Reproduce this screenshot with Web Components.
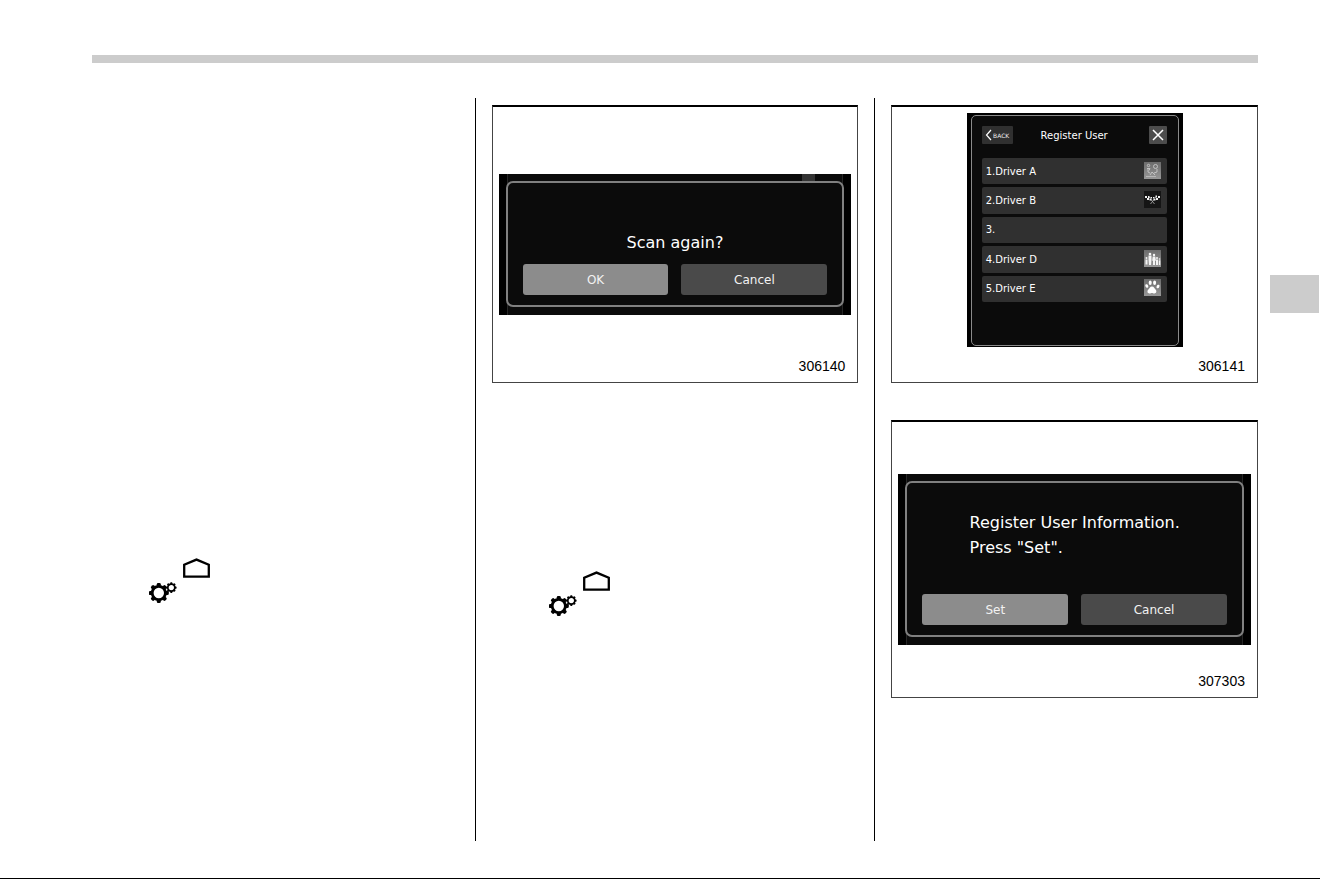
<!DOCTYPE html>
<html lang="en">
<head>
<meta charset="utf-8">
<title>Register User</title>
<style>
  body {
    margin: 0;
    background: #fff;
    font-family: "DejaVu Sans", sans-serif;
  }
</style>
</head>
<body>
<manual-page>
  <manual-column class="first">
    <menu-path></menu-path>
  </manual-column>
  <manual-column class="figures">
    <manual-figure number="306140" style="--top: 67px">
      <confirm-dialog accept="OK" class="strip" style="--height: 141px; --line: 24px; --text-gap: 9px">Scan again?</confirm-dialog>
    </manual-figure>
    <menu-path style="margin-top: 188px"></menu-path>
  </manual-column>
  <manual-column class="figures">
    <manual-figure number="306141" style="--top: 6px">
      <user-list>
        <user-row icon="couple">1.Driver A</user-row>
        <user-row icon="flags">2.Driver B</user-row>
        <user-row>3.</user-row>
        <user-row icon="family">4.Driver D</user-row>
        <user-row icon="paw">5.Driver E</user-row>
      </user-list>
    </manual-figure>
    <manual-figure number="307303" style="--top: 52px; margin-top: 37px">
      <confirm-dialog accept="Set" style="--height: 171px; --line: 25px; --text-gap: 34px">Register User Information.<br>Press "Set".</confirm-dialog>
    </manual-figure>
  </manual-column>
</manual-page>

<script>
class ManualPage extends HTMLElement {
  connectedCallback() {
    this.attachShadow({ mode: 'open' });
    this.shadowRoot.innerHTML = `
      <style>
        :host {
          box-sizing: border-box;
          display: grid;
          grid-template-columns: 1fr 49px;
          column-gap: 12px;
          min-height: 100vh;
          padding: 55px 1px 37px 92px;
          border-bottom: 1px solid #000;
        }
        main {
          display: flex;
          flex-direction: column;
          gap: 35px;
        }
        .bar {
          height: 8px;
          background: #ccc;
        }
        .columns {
          flex: 1;
          display: grid;
          grid-template-columns: 1fr 1px 1fr 1px 1fr;
          column-gap: 16px;
        }
        .columns ::slotted(*) { grid-row: 1; }
        .columns ::slotted(:nth-child(1)) { grid-column: 1; }
        .columns ::slotted(:nth-child(2)) { grid-column: 3; }
        .columns ::slotted(:nth-child(3)) { grid-column: 5; }
        .rule {
          grid-row: 1;
          background: #000;
        }
        .rule.a { grid-column: 2; }
        .rule.b { grid-column: 4; }
        aside { padding-top: 220px; }
        .tab {
          height: 38px;
          background: #ccc;
        }
      </style>
      <main>
        <div class="bar"></div>
        <div class="columns">
          <slot></slot>
          <div class="rule a"></div>
          <div class="rule b"></div>
        </div>
      </main>
      <aside><div class="tab"></div></aside>
    `;
  }
}

class ManualColumn extends HTMLElement {
  connectedCallback() {
    this.attachShadow({ mode: 'open' });
    this.shadowRoot.innerHTML = `
      <style>
        :host {
          display: flex;
          flex-direction: column;
          min-width: 0;
        }
        :host(.first) { padding-top: 460px; }
        :host(.figures) { padding-top: 7px; }
      </style>
      <slot></slot>
    `;
  }
}

class ManualFigure extends HTMLElement {
  connectedCallback() {
    this.attachShadow({ mode: 'open' });
    this.shadowRoot.innerHTML = `
      <style>
        :host { display: block; }
        figure {
          box-sizing: border-box;
          display: flex;
          flex-direction: column;
          min-height: 278px;
          margin: 0;
          padding: var(--top) 6px 8px;
          border: 1px solid #444;
          border-top: 2px solid #000;
        }
        figcaption {
          margin-top: auto;
          padding-right: 6px;
          text-align: right;
          font: 14px/16px "Liberation Sans", sans-serif;
          color: #000;
        }
      </style>
      <figure>
        <slot></slot>
        <figcaption>${this.getAttribute('number')}</figcaption>
      </figure>
    `;
  }
}

class ConfirmDialog extends HTMLElement {
  connectedCallback() {
    this.attachShadow({ mode: 'open' });
    this.shadowRoot.innerHTML = `
      <style>
        :host {
          box-sizing: border-box;
          display: flex;
          height: var(--height);
          padding: 7px 7px 8px;
          background:
            linear-gradient(#262626, #262626) 8px 0 / 1px 100% no-repeat,
            linear-gradient(#262626, #262626) calc(100% - 8px) 0 / 1px 100% no-repeat,
            linear-gradient(90deg, #000 8px, #0b0b0b 8px calc(100% - 8px), #000 calc(100% - 8px));
        }
        /* part of the list behind the dialog shows above its frame */
        :host(.strip) {
          background:
            linear-gradient(#333, #333) calc(100% - 36px) 0 / 13px 8px no-repeat,
            linear-gradient(#262626, #262626) 8px 0 / 1px 100% no-repeat,
            linear-gradient(#262626, #262626) calc(100% - 8px) 0 / 1px 100% no-repeat,
            linear-gradient(90deg, #000 8px, #0b0b0b 8px calc(100% - 8px), #000 calc(100% - 8px));
        }
        .dialog {
          flex: 1;
          display: flex;
          flex-direction: column;
          justify-content: flex-end;
          align-items: center;
          gap: var(--text-gap);
          padding: 0 15px 10px;
          border: 2px solid #808080;
          border-radius: 7px;
          background: #0b0b0b;
        }
        p {
          margin: 0;
          font-size: 16px;
          line-height: var(--line);
          color: #fff;
        }
        .buttons {
          align-self: stretch;
          display: grid;
          grid-template-columns: 1fr 1fr;
          gap: 13px;
        }
        button {
          height: 31px;
          padding: 0;
          border: 0;
          border-radius: 3px;
          background: #4a4a4a;
          font: inherit;
          font-size: 12px;
          color: #f2f2f2;
        }
        .accept { background: #8c8c8c; }
      </style>
      <div class="dialog" role="dialog">
        <p><slot></slot></p>
        <div class="buttons">
          <button class="accept" type="button">${this.getAttribute('accept')}</button>
          <button type="button">Cancel</button>
        </div>
      </div>
    `;
  }
}

class UserList extends HTMLElement {
  connectedCallback() {
    this.attachShadow({ mode: 'open' });
    this.shadowRoot.innerHTML = `
      <style>
        :host {
          box-sizing: border-box;
          align-self: center;
          display: flex;
          width: 216px;
          height: 234px;
          padding: 2px 4px 1px;
          background: #000;
        }
        .screen {
          flex: 1;
          padding: 10px 11px 10px 10px;
          border: 1px solid #8a8a8a;
          border-radius: 5px;
          background: #0b0b0b;
        }
        header {
          display: grid;
          grid-template-columns: 31px 1fr 31px;
          align-items: center;
          height: 18px;
          margin-bottom: 14px;
        }
        h2 {
          margin: 0;
          font-size: 10px;
          font-weight: normal;
          text-align: center;
          color: #fff;
        }
        button {
          display: flex;
          justify-content: center;
          align-items: center;
          gap: 1px;
          height: 18px;
          padding: 0;
          border: 0;
          border-radius: 1px;
          background: #303030;
          font: inherit;
          font-size: 6px;
          color: #eee;
        }
        .close {
          justify-self: end;
          width: 18px;
          background: #4c4c4c;
        }
        svg {
          fill: none;
          stroke: #fff;
        }
        .rows {
          display: grid;
          grid-auto-rows: 1fr;
          gap: 3px;
          height: 144px;
        }
      </style>
      <div class="screen">
        <header>
          <button class="back" type="button">
            <svg width="7" height="12" viewBox="0 0 7 12" stroke-width="1.2"><path d="M6 1 1.500 6 6 11"/></svg>BACK
          </button>
          <h2>Register User</h2>
          <button class="close" type="button" aria-label="Close">
            <svg width="12" height="12" viewBox="0 0 12 12" stroke-width="1.5"><path d="M1 1 11 11M11 1 1 11"/></svg>
          </button>
        </header>
        <div class="rows"><slot></slot></div>
      </div>
    `;
  }
}

const ROW_ICONS = {
  couple: `
    <rect width="17" height="17" fill="url(#g)"/>
    <g fill="none" stroke="#c8c8c8" stroke-width=".9">
      <circle cx="4.500" cy="3.500" r="1.200"/><circle cx="11.500" cy="4.500" r="2"/>
      <path d="M3 6.500h3l-1 2M4 6v4l2 1M13 7v3l-3 1M6 13l2-3 3 3"/>
      <path d="M2 14.500h10" stroke="#bbb"/>
    </g>`,
  flags: `
    <rect width="17" height="17" fill="#151515"/>
    <path d="M5 6 10.500 13M12 6 6.500 13" stroke="#aaa" stroke-width=".8"/>
    <g fill="#eee">
      <path d="M1 5h2v2H1zM3 7h2v2H3zM4 5h1.500v2H4zM5.500 8h2v1.500h-2zM6.500 6h1.500v1.500H6.500zM16 5h-2v2h2zM14 7h-2v2h2zM13 4.500h-1.500v2H13zM11.500 8h-2v1.500h2zM10.500 6H9v1.500h1.500z"/>
    </g>`,
  family: `
    <rect width="17" height="17" fill="url(#g)"/>
    <g fill="#f4f4f4">
      <circle cx="2.500" cy="8" r="1"/><path d="M1.500 9.500h2v5h-2z"/>
      <circle cx="6" cy="4" r="1.300"/><path d="M4.500 5.500h3V10L7 15H5l-.5-5z"/>
      <circle cx="10" cy="5" r="1.200"/><path d="M8.700 6.500h2.600l.6 4-.9.500v4H9v-4l-.8-.5z"/>
      <circle cx="13" cy="8" r="1"/><path d="M12 9.500h2V15h-2z"/>
      <circle cx="15.500" cy="9" r=".8"/><path d="M14.800 10.300h1.500V15h-1.500z"/>
    </g>`,
  paw: `
    <rect width="17" height="17" fill="url(#g)"/>
    <g fill="#fff">
      <ellipse cx="2.800" cy="7" rx="1.400" ry="1.900" transform="rotate(-25 2.800 7)"/>
      <ellipse cx="6.200" cy="3.800" rx="1.500" ry="2.200"/>
      <ellipse cx="10.600" cy="3.800" rx="1.500" ry="2.200"/>
      <ellipse cx="14" cy="7.500" rx="1.400" ry="1.900" transform="rotate(25 14 7.500)"/>
      <path d="M8 7.500c2 0 2.500 2 3.700 3.300 1.300 1.500.5 3.700-1.400 3.700-1 0-1.400-.5-2.300-.5s-1.500.5-2.500.5c-2 0-2.700-2.300-1.300-3.700C5.500 9.500 6 7.500 8 7.500z"/>
    </g>`
};

class UserRow extends HTMLElement {
  connectedCallback() {
    const icon = ROW_ICONS[this.getAttribute('icon')];
    this.attachShadow({ mode: 'open' });
    this.shadowRoot.innerHTML = `
      <style>
        :host { display: flex; }
        button {
          flex: 1;
          display: flex;
          justify-content: space-between;
          align-items: center;
          padding: 0 6px 0 4px;
          border: 0;
          border-radius: 2px;
          background: #303030;
          font: inherit;
          font-size: 10px;
          color: #fff;
        }
        svg { margin-bottom: 2px; }
      </style>
      <button type="button">
        <span><slot></slot></span>
        ${icon ? `<svg width="17" height="17" viewBox="0 0 17 17">
          <defs><linearGradient id="g" x2="0" y2="1"><stop stop-color="#6c6c6c"/><stop offset="1" stop-color="#989898"/></linearGradient></defs>
          ${icon}
        </svg>` : ''}
      </button>
    `;
  }
}

// Ring with eight stubby teeth, used for both gears
function gear(cx, cy, r, ring, tooth) {
  let teeth = '';
  for (let i = 0; i < 8; i++) {
    teeth += `<rect x="${cx - tooth / 2}" y="${cy - r}" width="${tooth}" height="${r * 0.4}" rx="${tooth / 3}" transform="rotate(${i * 45} ${cx} ${cy})"/>`;
  }
  return `<circle cx="${cx}" cy="${cy}" r="${r * 0.66}" fill="none" stroke="#000" stroke-width="${ring}"/>${teeth}`;
}

class MenuPath extends HTMLElement {
  connectedCallback() {
    this.attachShadow({ mode: 'open' });
    this.shadowRoot.innerHTML = `
      <style>
        :host {
          display: flex;
          flex-direction: column;
          gap: 4px;
          padding-left: 57px;
        }
        svg { display: block; }
        .home { margin-left: 34px; }
      </style>
      <svg class="home" width="27" height="20" viewBox="0 0 27 20" role="img" aria-label="Home">
        <path d="M1.200 18.700V6.700L13.500 1.600 25.800 6.700v12z" fill="none" stroke="#000" stroke-width="2.300"/>
      </svg>
      <svg width="28" height="21" viewBox="0 0 28 21" role="img" aria-label="Settings">
        ${gear(9.8, 11, 10, 2.8, 4)}
        ${gear(22.3, 5.6, 5.3, 1.7, 2.2)}
      </svg>
    `;
  }
}

customElements.define('manual-page', ManualPage);
customElements.define('manual-column', ManualColumn);
customElements.define('manual-figure', ManualFigure);
customElements.define('confirm-dialog', ConfirmDialog);
customElements.define('user-list', UserList);
customElements.define('user-row', UserRow);
customElements.define('menu-path', MenuPath);
</script>
</body>
</html>
